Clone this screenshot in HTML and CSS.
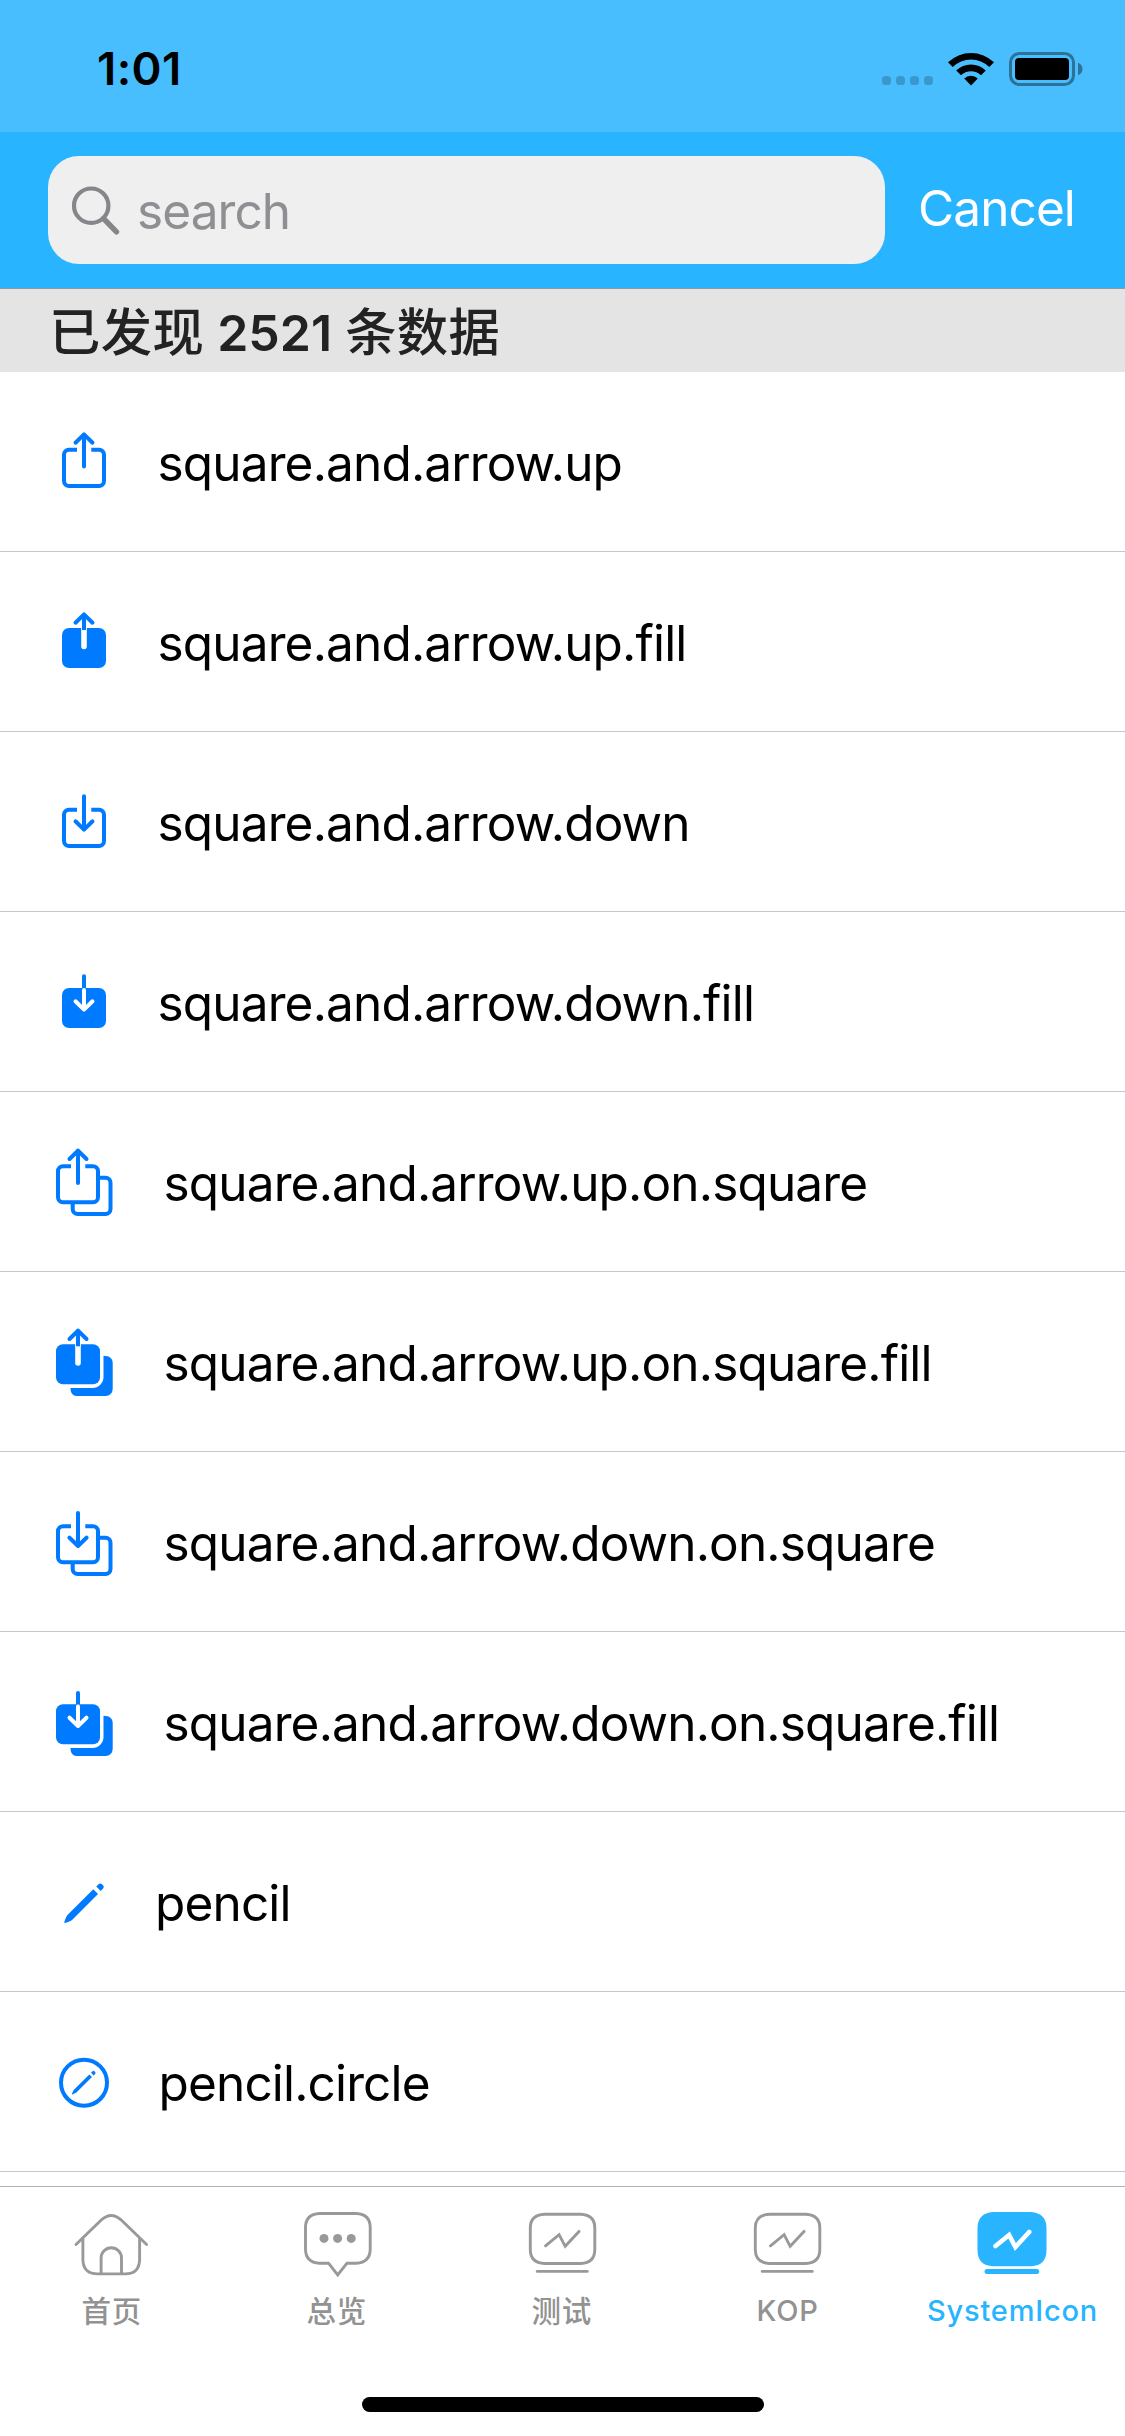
FILE: index.html
```html
<!DOCTYPE html>
<html lang="zh-CN">
<head>
<meta charset="utf-8">
<title>SystemIcon</title>
<link rel="stylesheet" href="styles.css">
</head>
<body>
<div class="screen">
  <header class="status">
    <span class="time">1:01</span>
    <div class="indicators">
      <svg class="dots" width="51" height="9" viewBox="0 0 51 9"><rect width="9" height="9" rx="3.6"/><rect x="14" width="9" height="9" rx="3.6"/><rect x="28" width="9" height="9" rx="3.6"/><rect x="42" width="9" height="9" rx="3.6"/></svg>
      <svg class="wifi" width="46" height="34" viewBox="0 0 46 34"><path d="M0 10.3A33 33 0 0 1 46 10.3L41.3 15A26 26 0 0 0 4.7 15ZM8.2 18.5A21.3 21.3 0 0 1 37.8 18.5L33 23.300A14.500 14.500 0 0 0 13 23.300ZM16.200 26.500A10 10 0 0 1 29.800 26.500L23 33.500Z"/></svg>
      <svg class="battery" width="74" height="34" viewBox="0 0 74 34"><rect class="shell" x="1.500" y="1.500" width="63" height="31" rx="9"/><rect x="6" y="6" width="54" height="22" rx="4"/><path class="nub" d="M69 10.700C75 13 75 21 69 23.300Z"/></svg>
    </div>
  </header>

  <div class="nav">
    <div class="field">
      <svg class="glass" width="50" height="50" viewBox="70 184 50 50"><circle cx="91.200" cy="204.700" r="17.200"/><path d="M103.500 217.500L116.500 230.800"/></svg>
      <span class="placeholder">search</span>
    </div>
    <span class="cancel">Cancel</span>
  </div>

  <h2 class="summary">已发现 <span class="count">2521</span> 条数据</h2>

  <ul class="list">
    <li class="row">
      <svg class="icon" viewBox="48 0 72 180"><path d="M77 77.700H69a5 5 0 0 0-5 5V109a5 5 0 0 0 5 5h30a5 5 0 0 0 5-5V82.700a5 5 0 0 0-5-5H91.300"/><path class="round" d="M84 62.500V94.500M75.500 70.700L84 62.400L92.500 70.700"/></svg>
      <span class="label">square.and.arrow.up</span>
    </li>
    <li class="row">
      <svg class="icon" viewBox="48 0 72 180"><rect class="solid" x="62" y="76" width="44" height="40" rx="7"/><path class="slot" d="M84 75V78"/><path class="slot round" d="M84 78V94.500"/><path d="M84 70V78"/><path class="round" d="M84 62.500V74M75.500 70.700L84 62.400L92.500 70.700"/></svg>
      <span class="label">square.and.arrow.up.fill</span>
    </li>
    <li class="row">
      <svg class="icon" viewBox="48 0 72 180"><path d="M77 77.700H69a5 5 0 0 0-5 5V109a5 5 0 0 0 5 5h30a5 5 0 0 0 5-5V82.700a5 5 0 0 0-5-5H91.300"/><path class="round" d="M84 64.300V97M75.500 89.300L84 97.600L92.500 89.300"/></svg>
      <span class="label">square.and.arrow.down</span>
    </li>
    <li class="row">
      <svg class="icon" viewBox="48 0 72 180"><rect class="solid" x="62" y="76" width="44" height="40" rx="7"/><path d="M84 70V76"/><path class="round" d="M84 64.300V72"/><path class="cut round" d="M84 78V97M75.500 89.300L84 97.600L92.500 89.300"/></svg>
      <span class="label">square.and.arrow.down.fill</span>
    </li>
    <li class="row wide">
      <svg class="icon" viewBox="48 0 72 180"><path d="M71 74.300H63a5 5 0 0 0-5 5V105.300a5 5 0 0 0 5 5h30a5 5 0 0 0 5-5V79.300a5 5 0 0 0-5-5H85.300"/><path class="round" d="M78 58.500V91M69.500 67L78 58.700L86.500 67"/><path d="M99 85.700H105.500a5 5 0 0 1 5 5V117a5 5 0 0 1-5 5H77.700a5 5 0 0 1-5-5V111"/></svg>
      <span class="label">square.and.arrow.up.on.square</span>
    </li>
    <li class="row wide">
      <svg class="icon" viewBox="48 0 72 180"><rect class="solid" x="56" y="72.300" width="44" height="40" rx="7"/><path class="slot" d="M78 71V74.300"/><path class="slot round" d="M78 74.300V91"/><path d="M78 66V74.300"/><path class="round" d="M78 58.500V70M69.500 67L78 58.700L86.500 67"/><path class="solid" d="M103.500 83.700C109.500 83.700 112.700 86.500 112.700 91V117a7 7 0 0 1-7 7H77.500C73 124 70.500 121.500 70.500 116H92.500A11 11 0 0 0 103.500 105Z"/></svg>
      <span class="label">square.and.arrow.up.on.square.fill</span>
    </li>
    <li class="row wide">
      <svg class="icon" viewBox="48 0 72 180"><path d="M71 74.300H63a5 5 0 0 0-5 5V105.300a5 5 0 0 0 5 5h30a5 5 0 0 0 5-5V79.300a5 5 0 0 0-5-5H85.300"/><path class="round" d="M78 61V93.500M69.500 85.700L78 94L86.500 85.700"/><path d="M99 85.700H105.500a5 5 0 0 1 5 5V117a5 5 0 0 1-5 5H77.700a5 5 0 0 1-5-5V111"/></svg>
      <span class="label">square.and.arrow.down.on.square</span>
    </li>
    <li class="row wide">
      <svg class="icon" viewBox="48 0 72 180"><rect class="solid" x="56" y="72.300" width="44" height="40" rx="7"/><path d="M78 66V72.500"/><path class="round" d="M78 61V68"/><path class="cut round" d="M78 74.500V93.500M69.500 85.700L78 94L86.500 85.700"/><path class="solid" d="M103.500 83.700C109.500 83.700 112.700 86.500 112.700 91V117a7 7 0 0 1-7 7H77.500C73 124 70.500 121.500 70.500 116H92.500A11 11 0 0 0 103.500 105Z"/></svg>
      <span class="label">square.and.arrow.down.on.square.fill</span>
    </li>
    <li class="row narrow">
      <svg class="icon" viewBox="48 0 72 180"><path class="solid" d="M93.300 77.200L98 82L71.800 108.200Q68 110.300 65 110.900Q64 110.900 64.300 110Q65.500 106 67.200 103.300ZM96.300 74.500L98.800 72Q100.300 70.800 101.800 72L103.300 73.500Q104.300 75 103.200 76.500L100.600 79Z"/></svg>
      <span class="label">pencil</span>
    </li>
    <li class="row circle">
      <svg class="icon" viewBox="48 0 72 180"><circle cx="84" cy="90.700" r="23"/><path class="solid" d="M89.300 82.400L92 85.100L76.400 100.500L72.500 102.500Q71.700 102.600 71.900 101.800L73.700 97.900ZM91 80.700L92.600 79.200Q93.500 78.500 94.400 79.300L95.200 80.100Q95.900 81 95.200 81.900L93.700 83.400Z"/></svg>
      <span class="label">pencil.circle</span>
    </li>
  </ul>

  <footer class="tabbar">
    <nav class="tabs">
      <a class="tab cjk">
        <svg class="tabicon" viewBox="0 45 225 80"><path d="M76 84.500L101.500 59.800Q111.200 51 121 59.800L146.600 84.500M82.900 78.500V100Q83.500 113.900 97.500 113.900H125.500Q139 113.900 139.600 100V78.500M101.100 113.500V98a10.200 10.200 0 0 1 20.400 0V113.500"/></svg>
        <span>首页</span>
      </a>
      <a class="tab cjk">
        <svg class="tabicon" viewBox="0 45 225 80"><path d="M103.500 103.200H94.500Q80.500 102.500 80.500 89V67.500Q80.500 54.200 94.500 53.500H131.200Q145.200 54.200 145.200 67.500V89Q145.200 102.500 131.200 103.200H122L112.700 115L103.500 103.200Z"/><g class="blob"><circle cx="99" cy="78.400" r="4.500"/><circle cx="112.600" cy="78.400" r="4.500"/><circle cx="126.200" cy="78.400" r="4.500"/></g></svg>
        <span>总览</span>
      </a>
      <a class="tab cjk">
        <svg class="tabicon" viewBox="0 45 225 80"><path d="M94.500 54.200H130.800Q144.800 54.800 144.800 68V89.500Q144.800 102.800 130.800 103.500H94.500Q80.300 102.800 80.300 89.500V68Q80.300 54.800 94.500 54.200ZM87.200 111.400H137.300M95.500 85.800L109.100 74.700L115.200 86.300L129 71.400"/></svg>
        <span>测试</span>
      </a>
      <a class="tab">
        <svg class="tabicon" viewBox="0 45 225 80"><path d="M94.500 54.200H130.800Q144.800 54.800 144.800 68V89.500Q144.800 102.800 130.800 103.500H94.500Q80.300 102.800 80.300 89.500V68Q80.300 54.800 94.500 54.200ZM87.200 111.400H137.300M95.500 85.800L109.100 74.700L115.200 86.300L129 71.400"/></svg>
        <span>KOP</span>
      </a>
      <a class="tab active">
        <svg class="tabicon" viewBox="0 45 225 80"><path class="blob" d="M93 52H131Q146.500 53 146.500 68.500V90Q146.500 105.500 131 106.300H93Q77.500 105.500 77.500 90V68.500Q77.500 53 93 52Z"/><path class="bar" d="M87 111.500H136.700"/><path class="bolt" d="M95.500 86L109.100 75L115.400 87L129.200 72"/></svg>
        <span>SystemIcon</span>
      </a>
    </nav>
    <div class="home-indicator"></div>
  </footer>
</div>
</body>
</html>
```
FILE: styles.css
```css
* { box-sizing: border-box; margin: 0; padding: 0; }

body {
  width: 1125px;
  height: 2436px;
  overflow: hidden;
  background: #fff;
  font-family: Inter, "Noto Sans CJK SC", sans-serif;
  color: #000;
}

.screen { display: flex; flex-direction: column; height: 2436px; }

.status {
  height: 132px;
  flex: none;
  display: flex;
  justify-content: space-between;
  padding: 52px 42px 0 97px;
  background: #48beff;
}
.time { font-size: 45.5px; font-weight: 600; line-height: 34px; letter-spacing: 0.4px; }
.indicators { display: flex; height: 34px; align-items: flex-start; }
.dots { margin: 24px 15px 0 0; fill: #3b98cc; }
.wifi { margin-right: 15px; }
.battery .shell { fill: none; stroke: #2d7299; stroke-width: 3; }
.battery .nub { fill: #2d7299; }

.nav {
  height: 157px;
  flex: none;
  display: flex;
  align-items: flex-start;
  padding: 24px 48px 0;
  background: #28b4ff;
  border-bottom: 1px solid #8f9ba3;
}
.field {
  width: 837px;
  height: 108px;
  display: flex;
  align-items: center;
  padding-left: 22px;
  border-radius: 31px;
  background: #efefef;
}
.glass { fill: none; stroke: #85858a; stroke-width: 4.2; stroke-linecap: round; }
.glass path { stroke-width: 5.4; }
.placeholder { margin-left: 17px; padding-top: 1px; font-size: 49.5px; color: #8e8e93; letter-spacing: -0.9px; }
.cancel { margin-left: 33px; line-height: 104px; font-size: 49.5px; color: #fff; letter-spacing: -0.9px; }

.summary {
  height: 83px;
  flex: none;
  padding-left: 49px;
  background: #e4e4e4;
  color: #222;
  font-size: 51.3px;
  font-weight: 500;
  line-height: 86px;
  letter-spacing: 0.4px;
  white-space: nowrap;
}
.count { margin: 0 -1px 0 -1px; font-size: 50px; font-weight: 600; letter-spacing: 0; }

.list { flex: 1; overflow: hidden; list-style: none; }
.row {
  height: 180px;
  display: flex;
  padding-left: 48px;
  border-bottom: 1px solid #c6c6c8;
}
.icon {
  width: 72px;
  height: 180px;
  flex: none;
  fill: none;
  stroke: #007aff;
  stroke-width: 4;
}
.icon .round { stroke-linecap: round; stroke-linejoin: round; }
.icon .solid { fill: #007aff; stroke: none; }
.icon .slot { stroke: #fff; stroke-width: 5.6; }
.icon .cut { stroke: #fff; }
.label { margin-left: 37.5px; font-size: 49.5px; line-height: 182px; letter-spacing: -0.84px; white-space: nowrap; }
.wide .label { margin-left: 43.5px; }
.narrow .label { margin-left: 35px; }
.circle .label { margin-left: 38.5px; }

.tabbar {
  height: 250px;
  flex: none;
  display: flex;
  flex-direction: column;
  align-items: center;
  border-top: 1px solid #b2b2b2;
}
.tabs { width: 100%; height: 210px; display: flex; padding-top: 18px; }
.tab {
  width: 225px;
  display: flex;
  flex-direction: column;
  align-items: center;
  color: #929292;
  font-size: 29px;
  font-weight: 500;
  line-height: 52px;
  letter-spacing: 0.8px;
}
.tab.cjk { font-size: 29.5px; }
.tab.cjk span { margin-right: 1.5px; }
.tab.active { color: #28b4ff; }
.tabicon {
  width: 225px;
  height: 80px;
  flex: none;
  fill: none;
  stroke: #999;
  stroke-width: 2.9;
  stroke-linecap: round;
}
.tabicon .blob { fill: #999; stroke: none; }
.active .tabicon .blob { fill: #28b4ff; }
.active .tabicon .bar { stroke: #28b4ff; stroke-width: 5; }
.active .tabicon .bolt { stroke: #fff; stroke-width: 4.6; }
.home-indicator { width: 402px; height: 15px; border-radius: 8px; background: #000; }
```
